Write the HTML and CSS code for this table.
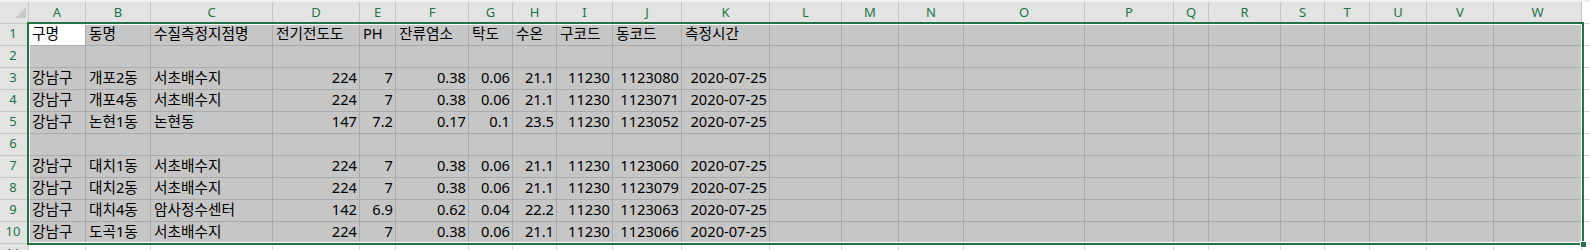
FILE: index.html
```html
<!DOCTYPE html>
<html lang="ko">
<head>
<meta charset="utf-8">
<title>Sheet</title>
<link rel="stylesheet" href="styles.css">
</head>
<body>
<div class="sheet">
  <div class="strip"></div>
  <div class="row hdr">
    <div class="corner"><span class="tri"></span></div>
    <div>A</div><div>B</div><div>C</div><div>D</div><div>E</div><div>F</div><div>G</div><div>H</div><div>I</div><div>J</div><div>K</div><div>L</div><div>M</div><div>N</div><div>O</div><div>P</div><div>Q</div><div>R</div><div>S</div><div>T</div><div>U</div><div>V</div><div>W</div><div></div>
  </div>
  <div class="row">
    <div class="rn">1</div><div class="act">구명</div><div>동명</div><div>수질측정지점명</div><div>전기전도도</div><div>PH</div><div>잔류염소</div><div>탁도</div><div>수온</div><div>구코드</div><div>동코드</div><div>측정시간</div>
    <div></div><div></div><div></div><div></div><div></div><div></div><div></div><div></div><div></div><div></div><div></div><div></div><div></div>
  </div>
  <div class="row">
    <div class="rn">2</div><div></div><div></div><div></div><div></div><div></div><div></div><div></div><div></div><div></div><div></div><div></div>
    <div></div><div></div><div></div><div></div><div></div><div></div><div></div><div></div><div></div><div></div><div></div><div></div><div></div>
  </div>
  <div class="row">
    <div class="rn">3</div><div>강남구</div><div>개포2동</div><div>서초배수지</div><div class="n">224</div><div class="n">7</div><div class="n">0.38</div><div class="n">0.06</div><div class="n">21.1</div><div class="n">11230</div><div class="n">1123080</div><div class="n">2020-07-25</div>
    <div></div><div></div><div></div><div></div><div></div><div></div><div></div><div></div><div></div><div></div><div></div><div></div><div></div>
  </div>
  <div class="row">
    <div class="rn">4</div><div>강남구</div><div>개포4동</div><div>서초배수지</div><div class="n">224</div><div class="n">7</div><div class="n">0.38</div><div class="n">0.06</div><div class="n">21.1</div><div class="n">11230</div><div class="n">1123071</div><div class="n">2020-07-25</div>
    <div></div><div></div><div></div><div></div><div></div><div></div><div></div><div></div><div></div><div></div><div></div><div></div><div></div>
  </div>
  <div class="row">
    <div class="rn">5</div><div>강남구</div><div>논현1동</div><div>논현동</div><div class="n">147</div><div class="n">7.2</div><div class="n">0.17</div><div class="n">0.1</div><div class="n">23.5</div><div class="n">11230</div><div class="n">1123052</div><div class="n">2020-07-25</div>
    <div></div><div></div><div></div><div></div><div></div><div></div><div></div><div></div><div></div><div></div><div></div><div></div><div></div>
  </div>
  <div class="row">
    <div class="rn">6</div><div></div><div></div><div></div><div></div><div></div><div></div><div></div><div></div><div></div><div></div><div></div>
    <div></div><div></div><div></div><div></div><div></div><div></div><div></div><div></div><div></div><div></div><div></div><div></div><div></div>
  </div>
  <div class="row">
    <div class="rn">7</div><div>강남구</div><div>대치1동</div><div>서초배수지</div><div class="n">224</div><div class="n">7</div><div class="n">0.38</div><div class="n">0.06</div><div class="n">21.1</div><div class="n">11230</div><div class="n">1123060</div><div class="n">2020-07-25</div>
    <div></div><div></div><div></div><div></div><div></div><div></div><div></div><div></div><div></div><div></div><div></div><div></div><div></div>
  </div>
  <div class="row">
    <div class="rn">8</div><div>강남구</div><div>대치2동</div><div>서초배수지</div><div class="n">224</div><div class="n">7</div><div class="n">0.38</div><div class="n">0.06</div><div class="n">21.1</div><div class="n">11230</div><div class="n">1123079</div><div class="n">2020-07-25</div>
    <div></div><div></div><div></div><div></div><div></div><div></div><div></div><div></div><div></div><div></div><div></div><div></div><div></div>
  </div>
  <div class="row">
    <div class="rn">9</div><div>강남구</div><div>대치4동</div><div>암사정수센터</div><div class="n">142</div><div class="n">6.9</div><div class="n">0.62</div><div class="n">0.04</div><div class="n">22.2</div><div class="n">11230</div><div class="n">1123063</div><div class="n">2020-07-25</div>
    <div></div><div></div><div></div><div></div><div></div><div></div><div></div><div></div><div></div><div></div><div></div><div></div><div></div>
  </div>
  <div class="row">
    <div class="rn">10</div><div>강남구</div><div>도곡1동</div><div>서초배수지</div><div class="n">224</div><div class="n">7</div><div class="n">0.38</div><div class="n">0.06</div><div class="n">21.1</div><div class="n">11230</div><div class="n">1123066</div><div class="n">2020-07-25</div>
    <div></div><div></div><div></div><div></div><div></div><div></div><div></div><div></div><div></div><div></div><div></div><div></div><div></div>
  </div>
  <div class="row out">
    <div class="rn">11</div><div></div><div></div><div></div><div></div><div></div><div></div><div></div><div></div><div></div><div></div><div></div>
    <div></div><div></div><div></div><div></div><div></div><div></div><div></div><div></div><div></div><div></div><div></div><div></div><div></div>
  </div>
  <div class="selection"><span class="handle"></span></div>
</div>
</body>
</html>
```

FILE: styles.css
```css
html, body {
  margin: 0;
  padding: 0;
  background: #ffffff;
  overflow: hidden;
}

.sheet {
  --cols: 29px 57px 65px 122px 87px 36px 73px 44px 44px 56px 69px 88px 72px 57px 65px 121px 89px 35px 72px 44px 45px 57px 67px 88px 40px;
  position: relative;
  width: 1590px;
  height: 250px;
  overflow: hidden;
  font-family: "Noto Sans", "Noto Sans CJK KR", sans-serif;
  color: #000000;
}

.strip {
  height: 2px;
  background: #f2f0e9;
}

.row {
  display: grid;
  grid-template-columns: var(--cols);
  height: 22px;
}

.row > div {
  box-sizing: border-box;
  border-right: 1px solid #ababab;
  border-bottom: 1px solid #ababab;
  background: #c6c6c6;
  padding: 0 3px;
  font-size: 14.67px;
  line-height: 19px;
  white-space: nowrap;
  overflow: hidden;
}

.row > .n {
  text-align: right;
  padding: 0 2px 0 0;
}

.row > .act {
  background: #ffffff;
}

.row > div:last-child,
.out > div {
  background: #ffffff;
  border-color: #dadada;
}

.row > .rn,
.hdr > div {
  background: #e3e3e3;
  border-right-color: #c6c6c6;
  border-bottom-color: #c6c6c6;
  color: #217346;
  font-size: 13px;
  text-align: center;
  padding: 0;
}

.row > .rn {
  line-height: 18px;
  padding-right: 2px;
}

.hdr > div {
  line-height: 21px;
}

.hdr > .corner {
  display: flex;
  align-items: flex-end;
  justify-content: flex-end;
  padding: 0 2px 5px 0;
}

.tri {
  width: 0;
  height: 0;
  border-left: 11px solid transparent;
  border-bottom: 11px solid #c9c9c9;
}

.selection {
  position: absolute;
  left: 27px;
  top: 22px;
  width: 1557px;
  height: 223px;
  box-sizing: border-box;
  border: 2px solid #217346;
  box-shadow: inset 0 0 0 1px #ffffff;
}

.handle {
  position: absolute;
  right: -5px;
  bottom: -5px;
  width: 5px;
  height: 5px;
  background: #217346;
  border: 1px solid #ffffff;
}
```
